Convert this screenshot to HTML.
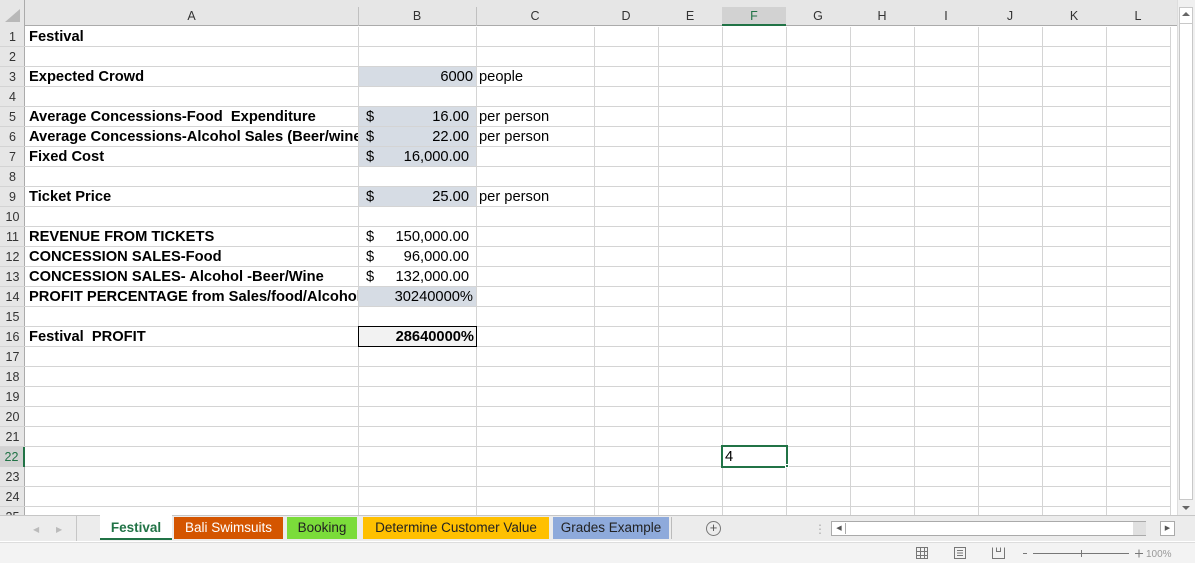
<!DOCTYPE html>
<html><head><style>
*{margin:0;padding:0;box-sizing:border-box}
body{width:1195px;height:563px;overflow:hidden;background:#fff;font-family:"Liberation Sans",Arial,sans-serif;position:relative}
.a{position:absolute}
.v{position:absolute;top:7px;width:1px;height:508px;background:#d4d4d4}
.h{position:absolute;left:0;height:1px;width:1170px;background:#d4d4d4}
.ch{position:absolute;top:7px;height:19px;font-size:12.5px;color:#333;text-align:center;line-height:19px}
.rh{position:absolute;left:0;width:25px;font-size:12.5px;color:#333;text-align:center;line-height:20px;height:20px}
.t{position:absolute;font-size:14.7px;line-height:20px;height:20px;white-space:nowrap;color:#000}
.b{font-weight:bold}
.f{position:absolute;background:#d6dce4}
.tab{position:absolute;top:517px;height:22px;font-size:13.5px;line-height:22px;text-align:center;color:#222}
</style></head><body>
<div class="a" style="left:0;top:0;width:1177px;height:26px;background:#e6e6e6;border-bottom:1px solid #ababab"></div>
<div class="a" style="left:0;top:0;width:25px;height:515px;background:#e6e6e6;border-right:1px solid #ababab"></div>
<div class="a" style="left:5px;top:9px;width:0;height:0;border-left:15px solid transparent;border-bottom:13px solid #b8b8b8"></div>
<div class="f" style="left:359px;top:67px;width:117px;height:19px"></div>
<div class="f" style="left:359px;top:107px;width:117px;height:59px"></div>
<div class="f" style="left:359px;top:187px;width:117px;height:19px"></div>
<div class="f" style="left:359px;top:287px;width:117px;height:19px"></div>
<div class="v" style="left:358px;top:27px"></div><div class="v" style="left:476px;top:27px"></div><div class="v" style="left:594px;top:27px"></div><div class="v" style="left:658px;top:27px"></div><div class="v" style="left:722px;top:27px"></div><div class="v" style="left:786px;top:27px"></div><div class="v" style="left:850px;top:27px"></div><div class="v" style="left:914px;top:27px"></div><div class="v" style="left:978px;top:27px"></div><div class="v" style="left:1042px;top:27px"></div><div class="v" style="left:1106px;top:27px"></div><div class="v" style="left:1170px;top:27px"></div>
<div class="h" style="top:46px"></div><div class="h" style="top:66px"></div><div class="h" style="top:86px"></div><div class="h" style="top:106px"></div><div class="h" style="top:126px"></div><div class="h" style="top:146px"></div><div class="h" style="top:166px"></div><div class="h" style="top:186px"></div><div class="h" style="top:206px"></div><div class="h" style="top:226px"></div><div class="h" style="top:246px"></div><div class="h" style="top:266px"></div><div class="h" style="top:286px"></div><div class="h" style="top:306px"></div><div class="h" style="top:326px"></div><div class="h" style="top:346px"></div><div class="h" style="top:366px"></div><div class="h" style="top:386px"></div><div class="h" style="top:406px"></div><div class="h" style="top:426px"></div><div class="h" style="top:446px"></div><div class="h" style="top:466px"></div><div class="h" style="top:486px"></div><div class="h" style="top:506px"></div>
<div class="a" style="left:358px;top:7px;width:1px;height:19px;background:#c0c0c0"></div>
<div class="a" style="left:476px;top:7px;width:1px;height:19px;background:#c0c0c0"></div>
<div class="a" style="left:722px;top:7px;width:64px;height:19px;background:#d2d2d2;border-bottom:2px solid #217346"></div>
<div class="ch" style="left:25px;width:333px">A</div>
<div class="ch" style="left:358px;width:118px">B</div>
<div class="ch" style="left:476px;width:118px">C</div>
<div class="ch" style="left:594px;width:64px">D</div>
<div class="ch" style="left:658px;width:64px">E</div>
<div class="ch" style="left:722px;width:64px;color:#217346">F</div>
<div class="ch" style="left:786px;width:64px">G</div>
<div class="ch" style="left:850px;width:64px">H</div>
<div class="ch" style="left:914px;width:64px">I</div>
<div class="ch" style="left:978px;width:64px">J</div>
<div class="ch" style="left:1042px;width:64px">K</div>
<div class="ch" style="left:1106px;width:64px">L</div>
<div class="rh" style="top:27px">1</div><div class="rh" style="top:47px">2</div><div class="rh" style="top:67px">3</div><div class="rh" style="top:87px">4</div><div class="rh" style="top:107px">5</div><div class="rh" style="top:127px">6</div><div class="rh" style="top:147px">7</div><div class="rh" style="top:167px">8</div><div class="rh" style="top:187px">9</div><div class="rh" style="top:207px">10</div><div class="rh" style="top:227px">11</div><div class="rh" style="top:247px">12</div><div class="rh" style="top:267px">13</div><div class="rh" style="top:287px">14</div><div class="rh" style="top:307px">15</div><div class="rh" style="top:327px">16</div><div class="rh" style="top:347px">17</div><div class="rh" style="top:367px">18</div><div class="rh" style="top:387px">19</div><div class="rh" style="top:407px">20</div><div class="rh" style="top:427px">21</div>
<div class="rh" style="top:447px;background:#d2d2d2;color:#217346;border-right:2px solid #217346">22</div>
<div class="rh" style="top:467px">23</div><div class="rh" style="top:487px">24</div><div class="rh" style="top:507px;height:8px;overflow:hidden">25</div>
<div class="t b" style="left:29px;top:27px">Festival</div>
<div class="t b" style="left:29px;top:67px">Expected Crowd</div>
<div class="t" style="left:359px;top:67px;width:114px;text-align:right">6000</div>
<div class="t" style="left:479px;top:67px">people</div>
<div class="t b" style="left:29px;top:107px">Average Concessions-Food&nbsp; Expenditure</div>
<div class="t b" style="left:29px;top:127px;width:329px;overflow:hidden">Average Concessions-Alcohol Sales (Beer/wine)</div>
<div class="t b" style="left:29px;top:147px">Fixed Cost</div>
<div class="t b" style="left:29px;top:187px">Ticket Price</div>
<div class="t b" style="left:29px;top:227px">REVENUE FROM TICKETS</div>
<div class="t b" style="left:29px;top:247px">CONCESSION SALES-Food</div>
<div class="t b" style="left:29px;top:267px">CONCESSION SALES- Alcohol -Beer/Wine</div>
<div class="t b" style="left:29px;top:287px;width:329px;overflow:hidden">PROFIT PERCENTAGE from Sales/food/Alcohol</div>
<div class="t b" style="left:29px;top:327px">Festival&nbsp; PROFIT</div>
<div class="t" style="left:366px;top:107px">$</div><div class="t" style="left:359px;top:107px;width:110px;text-align:right">16.00</div><div class="t" style="left:479px;top:107px">per person</div>
<div class="t" style="left:366px;top:127px">$</div><div class="t" style="left:359px;top:127px;width:110px;text-align:right">22.00</div><div class="t" style="left:479px;top:127px">per person</div>
<div class="t" style="left:366px;top:147px">$</div><div class="t" style="left:359px;top:147px;width:110px;text-align:right">16,000.00</div>
<div class="t" style="left:366px;top:187px">$</div><div class="t" style="left:359px;top:187px;width:110px;text-align:right">25.00</div><div class="t" style="left:479px;top:187px">per person</div>
<div class="t" style="left:366px;top:227px">$</div><div class="t" style="left:359px;top:227px;width:110px;text-align:right">150,000.00</div>
<div class="t" style="left:366px;top:247px">$</div><div class="t" style="left:359px;top:247px;width:110px;text-align:right">96,000.00</div>
<div class="t" style="left:366px;top:267px">$</div><div class="t" style="left:359px;top:267px;width:110px;text-align:right">132,000.00</div>
<div class="t" style="left:359px;top:287px;width:114px;text-align:right">30240000%</div>
<div class="a" style="left:358px;top:326px;width:119px;height:21px;border:1px solid #000;background:#f2f2f2"></div>
<div class="t b" style="left:359px;top:327px;width:115px;text-align:right">28640000%</div>
<div class="a" style="left:721px;top:445px;width:67px;height:23px;border:2px solid #217346;background:#fff"></div>
<div class="a" style="left:785px;top:464px;width:4px;height:4px;background:#217346;border:1px solid #fff"></div>
<div class="t" style="left:725px;top:447px">4</div>
<div class="a" style="left:1177px;top:0;width:18px;height:515px;background:#f0f0f0;border-left:1px solid #ddd"></div>
<div class="a" style="left:1179px;top:7px;width:14px;height:493px;background:#fff;border:1px solid #c8c8c8"></div>
<div class="a" style="left:1179px;top:23px;width:14px;height:1px;background:#c8c8c8"></div>
<div class="a" style="left:1182px;top:12px;width:0;height:0;border-left:4px solid transparent;border-right:4px solid transparent;border-bottom:4px solid #666"></div>
<div class="a" style="left:1182px;top:506px;width:0;height:0;border-left:4px solid transparent;border-right:4px solid transparent;border-top:4px solid #666"></div>
<div class="a" style="left:0;top:515px;width:1195px;height:26px;background:#ececec;border-top:1px solid #c6c6c6"></div>
<div class="a" style="left:33px;top:525px;font-size:8px;color:#bbb">◀</div>
<div class="a" style="left:56px;top:525px;font-size:8px;color:#bbb">▶</div>
<div class="a" style="left:76px;top:515px;width:1px;height:26px;background:#c6c6c6"></div>
<div class="tab b" style="left:100px;top:515px;height:25px;width:72px;background:#fff;color:#217346;border-bottom:2px solid #217346;line-height:26px">Festival</div>
<div class="tab" style="left:174px;width:109px;background:#d45500;color:#fff">Bali Swimsuits</div>
<div class="tab" style="left:287px;width:70px;background:#7bdc3a">Booking</div>
<div class="tab" style="left:363px;width:186px;background:#ffc000">Determine Customer Value</div>
<div class="tab" style="left:553px;width:116px;background:#8eaadb">Grades Example</div>
<div class="a" style="left:671px;top:517px;width:1px;height:22px;background:#bbb"></div>
<div class="a" style="left:706px;top:521px;width:15px;height:15px;border:1px solid #777;border-radius:50%;font-size:13px;line-height:12px;text-align:center;color:#555">+</div>
<div class="a" style="left:814px;top:522px;font-size:12px;color:#aaa">⋮</div>
<div class="a" style="left:831px;top:521px;width:315px;height:15px;background:#fff;border:1px solid #aaa"></div>
<div class="a" style="left:833px;top:523px;width:13px;height:11px;border-right:1px solid #aaa;font-size:7px;line-height:11px;text-align:center;color:#555">◀</div>
<div class="a" style="left:1133px;top:522px;width:13px;height:13px;background:#e0e0e0"></div>
<div class="a" style="left:1160px;top:521px;width:15px;height:15px;border:1px solid #aaa;background:#fff;font-size:7px;line-height:13px;text-align:center;color:#555">▶</div>
<div class="a" style="left:0;top:542px;width:1195px;height:21px;background:#f3f3f3;border-top:1px solid #ddd"></div>
<svg class="a" style="left:915px;top:546px" width="270" height="14">
<g fill="none" stroke="#777" stroke-width="1">
<rect x="1.5" y="1.5" width="11" height="11"/><path d="M5.5 1.5v11M9.5 1.5v11M1.5 5.5h11M1.5 9.5h11"/>
<rect x="39.5" y="1.5" width="11" height="11"/><path d="M42 4.5h6M42 7h6M42 9.5h6"/>
<path d="M77.5 1.5v11h12v-11M81.5 1.5v4h4v-4"/>
<path d="M108 7.5h4M118 7.5h96M166.5 4v7M220 7.5h8M224 3.5v8"/>
</g>
<text x="231" y="11" font-size="10" fill="#999" font-family="Liberation Sans">100%</text>
</svg>
</body></html>
